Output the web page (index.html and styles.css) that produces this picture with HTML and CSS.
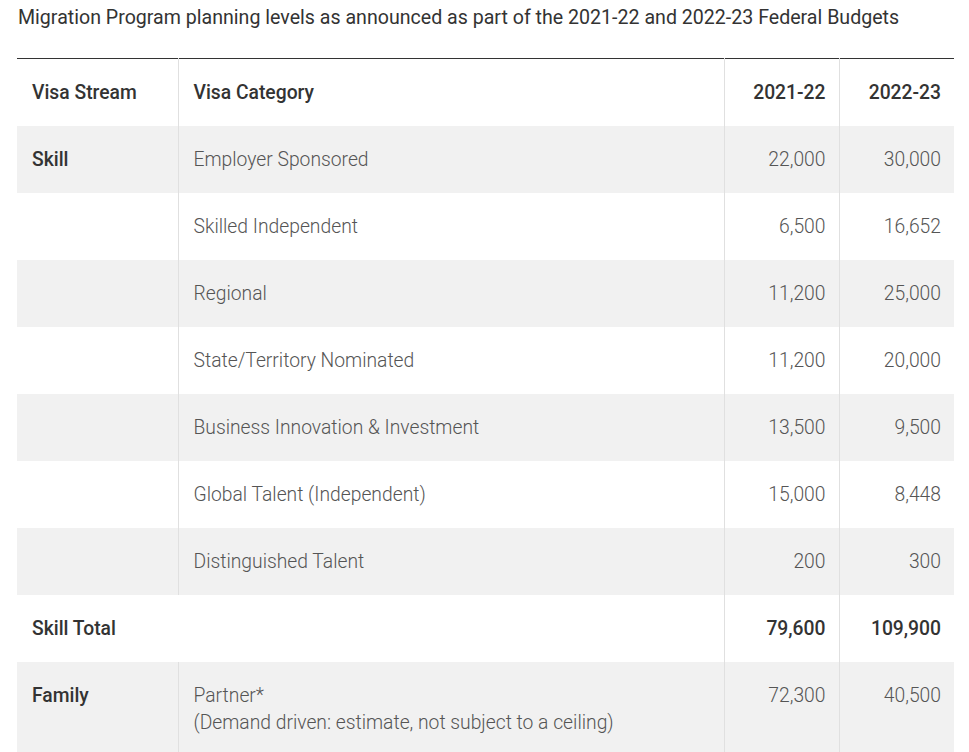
FILE: index.html
```html
<!DOCTYPE html>
<html>
<head>
<meta charset="utf-8">
<link rel="stylesheet" href="styles.css">
</head>
<body>
<div class="page">
  <p class="caption">Migration Program planning levels as announced as part of the 2021-22 and 2022-23 Federal Budgets</p>
  <table class="plan">
    <colgroup>
      <col class="c-stream"><col class="c-cat"><col class="c-num"><col class="c-num">
    </colgroup>
    <thead>
      <tr>
        <th>Visa Stream</th>
        <th class="sep">Visa Category</th>
        <th class="sep num">2021-22</th>
        <th class="sep num">2022-23</th>
      </tr>
    </thead>
    <tbody>
      <tr class="alt"><th>Skill</th><td class="sep">Employer Sponsored</td><td class="sep num">22,000</td><td class="sep num">30,000</td></tr>
      <tr><th></th><td class="sep">Skilled Independent</td><td class="sep num">6,500</td><td class="sep num">16,652</td></tr>
      <tr class="alt"><th></th><td class="sep">Regional</td><td class="sep num">11,200</td><td class="sep num">25,000</td></tr>
      <tr><th></th><td class="sep">State/Territory Nominated</td><td class="sep num">11,200</td><td class="sep num">20,000</td></tr>
      <tr class="alt"><th></th><td class="sep">Business Innovation &amp; Investment</td><td class="sep num">13,500</td><td class="sep num">9,500</td></tr>
      <tr><th></th><td class="sep">Global Talent (Independent)</td><td class="sep num">15,000</td><td class="sep num">8,448</td></tr>
      <tr class="alt"><th></th><td class="sep">Distinguished Talent</td><td class="sep num">200</td><td class="sep num">300</td></tr>
      <tr class="total"><th colspan="2">Skill Total</th><td class="sep num">79,600</td><td class="sep num">109,900</td></tr>
      <tr class="alt"><th>Family</th><td class="sep">Partner*<br>(Demand driven: estimate, not subject to a ceiling)</td><td class="sep num">72,300</td><td class="sep num">40,500</td></tr>
    </tbody>
  </table>
</div>
</body>
</html>
```

FILE: styles.css
```css
html, body {
  margin: 0;
  padding: 0;
  background: #fff;
}
.page {
  padding: 0 15px 0 17px;
  font-family: Roboto, "Liberation Sans", sans-serif;
  color: #333;
}
.caption {
  margin: 0;
  padding: 7px 0 0 1px;
  height: 58px;
  box-sizing: border-box;
  font-size: 19.6px;
  line-height: 22px;
  font-weight: 400;
  color: #333;
}
.plan {
  width: 937px;
  border-collapse: collapse;
  table-layout: fixed;
  font-size: 19.3px;
  line-height: 27px;
}
.c-stream { width: 161px; }
.c-cat { width: 546px; }
.c-num { width: 115px; }
.plan thead tr {
  border-top: 1px solid #333;
}
.plan th, .plan td {
  padding: 20px 13px 20px 15px;
  text-align: left;
  vertical-align: top;
}
.plan th {
  font-weight: 500;
  color: #333;
}
.plan td {
  font-weight: 300;
  color: #555;
}
.plan .sep {
  border-left: 1px solid #e0e0e0;
}
.plan .num {
  text-align: right;
}
.plan tbody tr.alt {
  background: #f1f1f1;
}
.plan tr.total td {
  font-weight: 500;
  color: #333;
}
```
